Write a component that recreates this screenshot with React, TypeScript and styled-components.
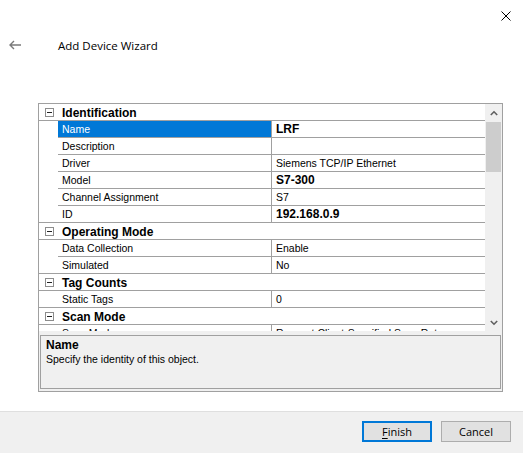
import React from "react";
import styled, { createGlobalStyle } from "styled-components";

const GlobalStyle = createGlobalStyle`
  html, body { margin: 0; padding: 0; background: #ffffff; }
  body { font-family: "Liberation Sans", Arial, sans-serif; color: #000; }
  * { box-sizing: border-box; }
`;

const Page = styled.div`
  width: 523px;
  height: 453px;
  display: flex;
  flex-direction: column;
  background: #fff;
  overflow: hidden;
`;

const Header = styled.div`
  height: 103px;
  display: flex;
  flex-direction: column;
`;

const CloseRow = styled.div`
  display: flex;
  justify-content: flex-end;
  padding: 11px 12px 0 0;
  height: 21px;
`;

const CloseButton = styled.div`
  width: 10px;
  height: 10px;
  display: flex;
`;

const TitleRow = styled.div`
  display: flex;
  align-items: center;
  height: 20px;
  margin-top: 14px;
  padding-left: 9px;
`;

const BackArrow = styled.div`
  width: 12px;
  height: 10px;
  display: flex;
  margin-right: 37px;
`;

const Title = styled.div`
  font-family: "Open Sans", "Noto Sans", sans-serif;
  font-size: 11.5px;
  color: #000;
`;

const Grid = styled.div`
  margin-left: 38px;
  width: 465px;
  height: 289px;
  border: 1px solid #a0a0a0;
  background: #f0f0f0;
  display: flex;
  flex-direction: column;
`;

const RowsArea = styled.div`
  height: 227px;
  display: flex;
  background: #fff;
  overflow: hidden;
`;

const Rows = styled.div`
  width: 446px;
  display: flex;
  flex-direction: column;
  overflow: hidden;
`;

const CategoryRow = styled.div`
  flex: none;
  height: 17px;
  display: flex;
  align-items: center;
  border-bottom: 1px solid #a0a0a0;
`;

const Margin = styled.div`
  width: 19px;
  flex: none;
  height: 100%;
  display: flex;
  align-items: center;
  padding-left: 6px;
`;

const Toggle = styled.div`
  width: 9px;
  height: 9px;
  border: 1px solid #8c8c8c;
  display: flex;
  align-items: center;
  justify-content: center;
  background: #fff;
  &::after {
    content: "";
    width: 5px;
    height: 1px;
    background: #222;
  }
`;

const CategoryLabel = styled.div`
  padding-left: 4px;
  padding-top: 1px;
  font-size: 12px;
  font-weight: bold;
  white-space: nowrap;
`;

const PropRow = styled.div<{ $full?: boolean }>`
  flex: none;
  height: 17px;
  display: flex;
  border-bottom: ${(p) => (p.$full ? "1px solid #a0a0a0" : "none")};
`;

const PropBody = styled.div<{ $full?: boolean }>`
  flex: 1;
  display: flex;
  border-bottom: ${(p) => (p.$full ? "none" : "1px solid #a0a0a0")};
`;

const NameCell = styled.div<{ $selected?: boolean }>`
  width: 214px;
  flex: none;
  border-right: 1px solid #a0a0a0;
  background: ${(p) => (p.$selected ? "#0078d7" : "transparent")};
  color: ${(p) => (p.$selected ? "#fff" : "#000")};
  padding-left: 4px;
  font-size: 10.5px;
  line-height: 17px;
  white-space: nowrap;
  overflow: hidden;
`;

const ValueCell = styled.div<{ $bold?: boolean }>`
  flex: 1;
  padding-left: 4px;
  font-size: ${(p) => (p.$bold ? "12px" : "10.5px")};
  font-weight: ${(p) => (p.$bold ? "bold" : "normal")};
  line-height: 17px;
  white-space: nowrap;
  overflow: hidden;
`;

const ScrollBar = styled.div`
  width: 17px;
  flex: none;
  background: #f0f0f0;
  display: flex;
  flex-direction: column;
`;

const ScrollButton = styled.div`
  height: 17px;
  flex: none;
  display: flex;
  align-items: center;
  justify-content: center;
`;

const Track = styled.div`
  flex: 1;
  display: flex;
  flex-direction: column;
  align-items: center;
  padding-top: 1px;
`;

const Thumb = styled.div`
  width: 15px;
  height: 50px;
  background: #cdcdcd;
`;

const Description = styled.div`
  margin: 4px 1px 2px 1px;
  height: 54px;
  border: 1px solid #a0a0a0;
  background: #f0f0f0;
  padding: 2px 0 0 5px;
  line-height: 14px;
`;

const DescTitle = styled.div`
  font-size: 12px;
  font-weight: bold;
`;

const DescText = styled.div`
  font-size: 10.5px;
`;

const Spacer = styled.div`
  flex: 1;
`;

const Footer = styled.div`
  height: 42px;
  flex: none;
  background: #f0f0f0;
  border-top: 1px solid #dfdfdf;
  display: flex;
  justify-content: flex-end;
  align-items: flex-start;
  padding: 9px 12px 0 0;
  gap: 9px;
`;

const Button = styled.div<{ $default?: boolean }>`
  width: 70px;
  height: 21px;
  background: #e1e1e1;
  border: ${(p) => (p.$default ? "2px solid #0078d7" : "1px solid #adadad")};
  display: flex;
  align-items: center;
  justify-content: center;
  font-family: "Open Sans", "Noto Sans", sans-serif;
  font-size: 11px;
  color: #000;
  u { text-decoration: underline; text-underline-offset: 2px; }
`;

const Chevron = ({ up }: { up?: boolean }) => (
  <svg width="8" height="6" viewBox="0 0 8 6">
    <path
      d={up ? "M0.8 5 L4 1.8 L7.2 5" : "M0.8 1 L4 4.2 L7.2 1"}
      fill="none"
      stroke="#606060"
      strokeWidth="1.6"
    />
  </svg>
);

type Prop = { name: string; value: string; bold?: boolean; selected?: boolean };
type Cat = { title: string; props: Prop[] };

const data: Cat[] = [
  {
    title: "Identification",
    props: [
      { name: "Name", value: "LRF", bold: true, selected: true },
      { name: "Description", value: "" },
      { name: "Driver", value: "Siemens TCP/IP Ethernet" },
      { name: "Model", value: "S7-300", bold: true },
      { name: "Channel Assignment", value: "S7" },
      { name: "ID", value: "192.168.0.9", bold: true },
    ],
  },
  {
    title: "Operating Mode",
    props: [
      { name: "Data Collection", value: "Enable" },
      { name: "Simulated", value: "No" },
    ],
  },
  { title: "Tag Counts", props: [{ name: "Static Tags", value: "0" }] },
  {
    title: "Scan Mode",
    props: [{ name: "Scan Mode", value: "Respect Client-Specified Scan Rate" }],
  },
];

export default function App() {
  return (
    <>
      <GlobalStyle />
      <Page>
        <Header>
          <CloseRow>
            <CloseButton>
              <svg width="10" height="10" viewBox="0 0 10 10">
                <path d="M0.5 0.5 L9.5 9.5 M9.5 0.5 L0.5 9.5" stroke="#000" strokeWidth="1" />
              </svg>
            </CloseButton>
          </CloseRow>
          <TitleRow>
            <BackArrow>
              <svg width="12" height="10" viewBox="0 0 12 10">
                <path d="M5 1 L1 5 L5 9 M1 5 H12" fill="none" stroke="#7a7a7a" strokeWidth="1.4" />
              </svg>
            </BackArrow>
            <Title>Add Device Wizard</Title>
          </TitleRow>
        </Header>
        <Grid>
          <RowsArea>
            <Rows>
              {data.map((cat, ci) => (
                <React.Fragment key={cat.title}>
                  <CategoryRow>
                    <Margin>
                      <Toggle />
                    </Margin>
                    <CategoryLabel>{cat.title}</CategoryLabel>
                  </CategoryRow>
                  {cat.props.map((p, pi) => {
                    const full = pi === cat.props.length - 1 && ci < data.length - 1;
                    return (
                      <PropRow key={p.name + pi} $full={full}>
                        <Margin />
                        <PropBody $full={full}>
                          <NameCell $selected={p.selected}>{p.name}</NameCell>
                          <ValueCell $bold={p.bold}>{p.value}</ValueCell>
                        </PropBody>
                      </PropRow>
                    );
                  })}
                </React.Fragment>
              ))}
            </Rows>
            <ScrollBar>
              <ScrollButton>
                <Chevron up />
              </ScrollButton>
              <Track>
                <Thumb />
              </Track>
              <ScrollButton>
                <Chevron />
              </ScrollButton>
            </ScrollBar>
          </RowsArea>
          <Description>
            <DescTitle>Name</DescTitle>
            <DescText>Specify the identity of this object.</DescText>
          </Description>
        </Grid>
        <Spacer />
        <Footer>
          <Button $default>
            <span>
              <u>F</u>inish
            </span>
          </Button>
          <Button>Cancel</Button>
        </Footer>
      </Page>
    </>
  );
}
